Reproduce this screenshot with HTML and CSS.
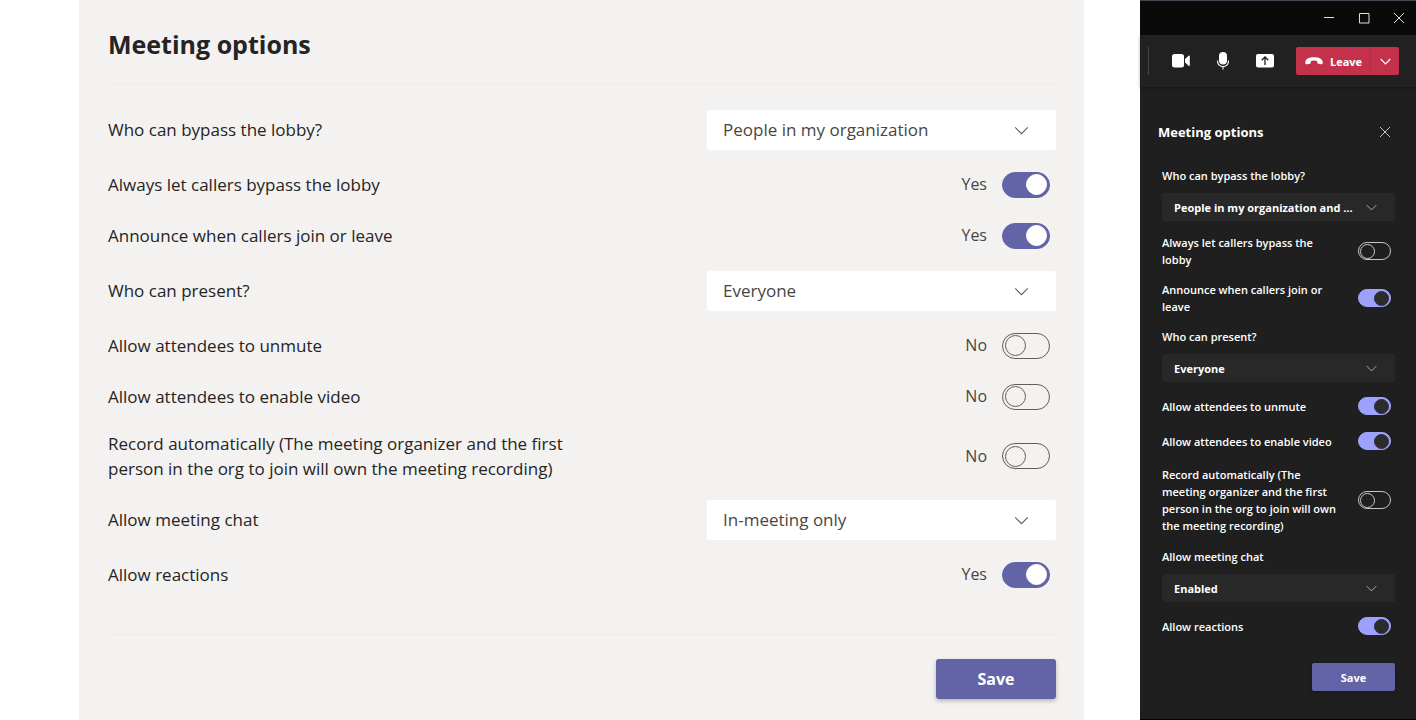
FILE: index.html
```html
<!DOCTYPE html>
<html lang="en">
<head>
<meta charset="utf-8">
<title>Meeting options</title>
<link rel="stylesheet" href="styles.css">
</head>
<body>
<svg class="sprite" aria-hidden="true">
  <symbol id="chevron" viewBox="0 0 16 10"><path d="M1 1.500l7 7 7-7" fill="none" stroke="currentColor" stroke-width="1.200"/></symbol>
  <symbol id="cross" viewBox="0 0 12 12"><path d="M1 1l10 10M11 1L1 11" fill="none" stroke="currentColor" stroke-width="1"/></symbol>
</svg>
<div class="page">
  <main class="options">
    <h1 class="options-title">Meeting options</h1>
    <form class="options-form">
      <div class="row row-select">
        <label class="row-label" for="lobby">Who can bypass the lobby?</label>
        <span class="picker"><select id="lobby"><option>People in my organization</option></select><svg class="picker-arrow"><use href="#chevron"/></svg></span>
      </div>
      <div class="row">
        <label class="row-label" for="callers">Always let callers bypass the lobby</label>
        <span class="state">Yes</span><input class="switch" type="checkbox" id="callers" checked>
      </div>
      <div class="row">
        <label class="row-label" for="announce">Announce when callers join or leave</label>
        <span class="state">Yes</span><input class="switch" type="checkbox" id="announce" checked>
      </div>
      <div class="row row-select">
        <label class="row-label" for="present">Who can present?</label>
        <span class="picker"><select id="present"><option>Everyone</option></select><svg class="picker-arrow"><use href="#chevron"/></svg></span>
      </div>
      <div class="row">
        <label class="row-label" for="unmute">Allow attendees to unmute</label>
        <span class="state">No</span><input class="switch" type="checkbox" id="unmute">
      </div>
      <div class="row">
        <label class="row-label" for="video">Allow attendees to enable video</label>
        <span class="state">No</span><input class="switch" type="checkbox" id="video">
      </div>
      <div class="row row-tall">
        <label class="row-label" for="record">Record automatically (The meeting organizer and the first person in the org to join will own the meeting recording)</label>
        <span class="state">No</span><input class="switch" type="checkbox" id="record">
      </div>
      <div class="row row-select">
        <label class="row-label" for="chat">Allow meeting chat</label>
        <span class="picker"><select id="chat"><option>In-meeting only</option></select><svg class="picker-arrow"><use href="#chevron"/></svg></span>
      </div>
      <div class="row">
        <label class="row-label" for="reactions">Allow reactions</label>
        <span class="state">Yes</span><input class="switch" type="checkbox" id="reactions" checked>
      </div>
      <div class="options-footer"><button class="save" type="button">Save</button></div>
    </form>
  </main>

  <aside class="call">
    <div class="titlebar">
      <button class="win-button" aria-label="Minimize"><svg width="12" height="12" viewBox="0 0 12 12"><path d="M1 5.500h10" stroke="currentColor"/></svg></button>
      <button class="win-button" aria-label="Maximize"><svg width="12" height="12" viewBox="0 0 12 12"><path d="M1.500 1.500h9.500v9.500h-9.500z" fill="none" stroke="currentColor"/></svg></button>
      <button class="win-button" aria-label="Close window"><svg width="12" height="12"><use href="#cross"/></svg></button>
    </div>
    <div class="toolbar">
      <span class="divider"></span>
      <div class="tools">
        <button class="tool" aria-label="Camera"><svg width="18" height="14" viewBox="0 0 18 14"><rect width="12" height="13.500" rx="2.500" fill="currentColor"/><path d="M13 5l3.600-3.200q1.200-.6 1.200.7v8.600q0 1.300-1.200.7L13 8.600z" fill="currentColor"/></svg></button>
        <button class="tool" aria-label="Microphone"><svg width="12" height="18" viewBox="0 0 12 18"><rect x="2" width="8" height="12.500" rx="4" fill="currentColor"/><path d="M.6 8.500v1.200a5.400 4.800 0 0 0 10.800 0V8.500M6 14.500v3" fill="none" stroke="currentColor" stroke-width="1.100"/></svg></button>
        <button class="tool" aria-label="Share"><svg width="18" height="14" viewBox="0 0 18 14"><rect width="18" height="13.500" rx="2" fill="currentColor"/><path d="M9 11V3.300M5.700 6.200L9 3l3.300 3.200" fill="none" stroke="#201f1f" stroke-width="1.300"/></svg></button>
      </div>
      <div class="leave">
        <button class="leave-main"><svg width="18" height="8" viewBox="0 0 18 8"><path d="M.3 5.200C.6 1.600 4.700.3 9 .3s8.400 1.300 8.700 4.900c.1 1.600-.4 2.200-1.500 2.100l-2.700-.5c-.9-.2-1.300-.7-1.300-1.600V3.900C10.300 3.200 7.700 3.200 5.800 3.900v1.300c0 .9-.4 1.400-1.300 1.600l-2.700.5C.7 7.400.2 6.800.3 5.200z" fill="currentColor"/></svg>Leave</button>
        <button class="leave-more" aria-label="More leave options"><svg width="11" height="7" viewBox="0 0 11 7"><path d="M.7 1l4.800 4.800L10.300 1" fill="none" stroke="currentColor" stroke-width="1.200"/></svg></button>
      </div>
    </div>
    <form class="side">
      <div class="side-head">
        <h2 class="side-title">Meeting options</h2>
        <button class="side-close" type="button" aria-label="Close"><svg width="12" height="12"><use href="#cross"/></svg></button>
      </div>
      <div class="side-list">
        <div class="field">
          <label for="s-lobby">Who can bypass the lobby?</label>
          <span class="picker picker-dark"><select id="s-lobby"><option>People in my organization and ...</option></select><svg class="picker-arrow"><use href="#chevron"/></svg></span>
        </div>
        <div class="side-row"><label for="s-callers">Always let callers bypass the lobby</label><input class="switch switch-dark" type="checkbox" id="s-callers"></div>
        <div class="side-row"><label for="s-announce">Announce when callers join or leave</label><input class="switch switch-dark" type="checkbox" id="s-announce" checked></div>
        <div class="field">
          <label for="s-present">Who can present?</label>
          <span class="picker picker-dark"><select id="s-present"><option>Everyone</option></select><svg class="picker-arrow"><use href="#chevron"/></svg></span>
        </div>
        <div class="side-row"><label for="s-unmute">Allow attendees to unmute</label><input class="switch switch-dark" type="checkbox" id="s-unmute" checked></div>
        <div class="side-row"><label for="s-video">Allow attendees to enable video</label><input class="switch switch-dark" type="checkbox" id="s-video" checked></div>
        <div class="side-row side-row-tall"><label for="s-record">Record automatically (The meeting organizer and the first person in the org to join will own the meeting recording)</label><input class="switch switch-dark" type="checkbox" id="s-record"></div>
        <div class="field">
          <label for="s-chat">Allow meeting chat</label>
          <span class="picker picker-dark"><select id="s-chat"><option>Enabled</option></select><svg class="picker-arrow"><use href="#chevron"/></svg></span>
        </div>
        <div class="side-row"><label for="s-reactions">Allow reactions</label><input class="switch switch-dark" type="checkbox" id="s-reactions" checked></div>
      </div>
      <button class="save save-dark" type="button">Save</button>
    </form>
  </aside>
</div>
</body>
</html>
```
FILE: styles.css
```css
* { box-sizing: border-box; }
body {
  margin: 0;
  background: #fff;
  font-family: "Open Sans", "Noto Sans", sans-serif;
}
button, select { font-family: inherit; margin: 0; border: 0; }
button { padding: 0; background: none; color: inherit; }
button svg { display: block; }
.sprite { display: none; }

.page { display: flex; min-height: 100vh; padding-left: 79px; gap: 56px; }

.options { flex: 1; padding: 24px 28px 20px 29px; background: #f3f2f1; }
.options-title {
  margin: 0;
  padding-bottom: 20px;
  border-bottom: 1px solid #edebe9;
  color: #252423;
  font-size: 25px;
  line-height: 40px;
  font-weight: 700;
}
.options-form { padding-top: 15px; }
.row { display: flex; align-items: center; min-height: 51px; padding-right: 6px; }
.row-select { min-height: 59px; padding-right: 0; }
.row-tall { min-height: 68px; }
.row-label {
  max-width: 480px;
  margin-right: auto;
  color: #252423;
  font-size: 17px;
  line-height: 25px;
  font-weight: 500;
}
.state { margin-right: 15px; color: #484644; font-size: 16px; line-height: 25px; }

.picker { position: relative; display: block; width: 349px; }
.picker select {
  appearance: none;
  display: block;
  width: 100%;
  height: 40px;
  padding: 0 48px 0 16px;
  border-radius: 3px;
  background: #fff;
  color: #484644;
  font-size: 17px;
}
.picker-arrow {
  position: absolute;
  top: 16px;
  right: 27px;
  width: 15px;
  height: 9px;
  color: #605e5c;
  pointer-events: none;
}

.switch {
  appearance: none;
  flex: none;
  display: flex;
  align-items: center;
  width: 48px;
  height: 26px;
  margin: 0;
  padding: 0 2px;
  border: 1px solid #605e5c;
  border-radius: 13px;
}
.switch::before {
  content: "";
  width: 19px;
  height: 19px;
  border: 1px solid #605e5c;
  border-radius: 50%;
}
.switch:checked { justify-content: flex-end; border-color: #6264a7; background: #6264a7; }
.switch:checked::before { border-color: #fff; background: #fff; }

.options-footer {
  display: flex;
  justify-content: flex-end;
  margin-top: 34px;
  padding-top: 24px;
  border-top: 1px solid #edebe9;
}
.save {
  width: 120px;
  height: 40px;
  border-radius: 3px;
  background: #6264a7;
  box-shadow: 0 2px 4px rgba(0, 0, 0, .25);
  color: #fff;
  font-size: 16px;
  font-weight: 700;
}

.call {
  flex: 0 0 276px;
  border-top: 1px solid #464654;
  border-bottom: 1px solid #000;
  background: #201f1f;
  color: #fff;
}
.titlebar {
  display: flex;
  justify-content: flex-end;
  align-items: center;
  gap: 23px;
  height: 34px;
  padding-right: 11px;
  background: #0a0a0a;
  color: #e1dfdd;
}
.toolbar {
  display: flex;
  align-items: center;
  height: 52px;
  padding: 0 17px 0 8px;
  background: #222121;
  box-shadow: 0 1px 3px rgba(0, 0, 0, .3);
}
.divider { width: 1px; height: 28px; background: #484644; }
.tools { display: flex; align-items: center; gap: 27px; margin: 0 auto; }
.leave { display: flex; height: 28px; border-radius: 2px; background: #c4314b; }
.leave-main {
  display: flex;
  align-items: center;
  gap: 7px;
  width: 75px;
  padding-left: 9px;
  border-right: 1px solid #b22d45;
  font-size: 11px;
  font-weight: 700;
}
.leave-more { display: grid; place-items: center; width: 28px; }

.side { padding: 34px 21px 28px 22px; font-size: 11px; line-height: 17px; font-weight: 600; }
.side-head { display: flex; justify-content: space-between; align-items: center; margin: 0 4px 24px -4px; }
.side-title { margin: 0; font-size: 13px; line-height: 22px; font-weight: 700; }
.side-close { color: #c8c6c4; }
.side-list { display: grid; gap: 13px; }
.field { display: grid; gap: 9px; }
.side-row { display: flex; justify-content: space-between; align-items: center; min-height: 22px; padding-right: 4px; }
.side-row label { max-width: 178px; }
.side-row-tall { padding-top: 1px; padding-bottom: 1px; }

.picker-dark { width: 100%; }
.picker-dark select {
  height: 28px;
  padding: 0 36px 0 12px;
  background: #292828;
  color: #fff;
  font-size: 11px;
  font-weight: 700;
}
.picker-dark .picker-arrow { top: 11px; right: 18px; width: 11px; height: 7px; color: #c8c6c4; }

.switch-dark { width: 33px; height: 18px; padding: 0 1px; border-color: #c8c6c4; border-radius: 9px; }
.switch-dark::before { width: 13px; height: 13px; border-color: #c8c6c4; }
.switch-dark:checked { border-color: #9ea2ff; background: #9ea2ff; }
.switch-dark:checked::before { border-color: #2d2c2c; background: #2d2c2c; }

.save-dark {
  display: block;
  width: 83px;
  height: 28px;
  margin: 26px 0 0 auto;
  border-radius: 2px;
  font-size: 11px;
}
```
